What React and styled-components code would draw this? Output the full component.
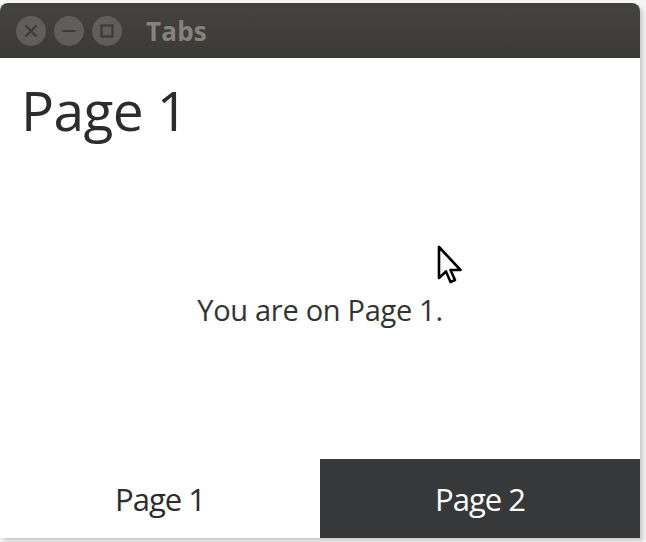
import React from "react";
import styled, { createGlobalStyle } from "styled-components";

const Global = createGlobalStyle`
  html, body { margin: 0; padding: 0; background: #ffffff; }
  body { width: 646px; height: 542px; overflow: hidden; font-family: "Open Sans", "Noto Sans", sans-serif; }
  #root { width: 646px; height: 542px; position: relative; }
`;

const Screen = styled.div`
  width: 646px;
  height: 542px;
  padding-top: 3px;
  box-sizing: border-box;
  background: #f6f6f6;
  position: relative;
`;

const Window = styled.div`
  width: 640px;
  height: 535px;
  display: flex;
  flex-direction: column;
  background: #ffffff;
  border-radius: 8px 8px 0 0;
  overflow: hidden;
  box-shadow: 3px 3px 4px rgba(0, 0, 0, 0.18);
`;

const TitleBar = styled.div`
  height: 55px;
  flex: none;
  display: flex;
  align-items: center;
  padding-left: 16px;
  gap: 8px;
  background: linear-gradient(#44433f, #3b3a36);
`;

const WinButton = styled.div`
  width: 30px;
  height: 30px;
  border-radius: 50%;
  background: #5f5e5a;
  display: flex;
  align-items: center;
  justify-content: center;
`;

const Title = styled.div`
  margin-left: 16px;
  font-family: "Open Sans", "DejaVu Sans", sans-serif;
  font-weight: 700;
  font-size: 26px;
  color: #85837e;
  letter-spacing: 0.2px;
`;

const Content = styled.div`
  flex: 1;
  display: flex;
  flex-direction: column;
`;

const Heading = styled.h1`
  margin: 0;
  padding: 25px 0 24px 21px;
  font-weight: 400;
  font-size: 55px;
  line-height: 53px;
  color: #2c2c2c;
  letter-spacing: -0.6px;
`;

const Body = styled.div`
  flex: 1;
  display: flex;
  align-items: center;
  justify-content: center;
  font-size: 29px;
  color: #333333;
  letter-spacing: -0.3px;
`;

const TabBar = styled.div`
  height: 79px;
  flex: none;
  display: flex;
`;

const Tab = styled.div`
  flex: 1;
  display: flex;
  align-items: center;
  justify-content: center;
  font-size: 31px;
  letter-spacing: -1px;
  background: ${(p) => (p.$active ? "#ffffff" : "#373839")};
  color: ${(p) => (p.$active ? "#2c2c2c" : "#ffffff")};
`;

const Cursor = styled.svg`
  position: absolute;
  left: 437px;
  top: 245px;
`;

const Glyph = ({ type }) => (
  <svg width="18" height="18" viewBox="0 0 18 18" fill="none" stroke="#3c3b37" strokeWidth="2.2">
    {type === "close" && <path d="M3.5 3.5 L14.5 14.5 M14.5 3.5 L3.5 14.5" />}
    {type === "min" && <path d="M2.5 9 L15.5 9" />}
    {type === "max" && <rect x="3.5" y="3.5" width="11" height="11" />}
  </svg>
);

export default function App() {
  return (
    <>
      <Global />
      <Screen>
        <Window>
          <TitleBar>
            <WinButton><Glyph type="close" /></WinButton>
            <WinButton><Glyph type="min" /></WinButton>
            <WinButton><Glyph type="max" /></WinButton>
            <Title>Tabs</Title>
          </TitleBar>
          <Content>
            <Heading>Page 1</Heading>
            <Body>You are on Page 1.</Body>
            <TabBar>
              <Tab $active>Page 1</Tab>
              <Tab>Page 2</Tab>
            </TabBar>
          </Content>
        </Window>
        <Cursor width="28" height="42" viewBox="0 0 28 42">
          <path
            d="M2 2 L2 33 L9 26.5 L13.5 37 L18 35 L13.5 25 L23.5 25 Z"
            fill="#ffffff"
            stroke="#000000"
            strokeWidth="2.6"
            strokeLinejoin="round"
          />
        </Cursor>
      </Screen>
    </>
  );
}
